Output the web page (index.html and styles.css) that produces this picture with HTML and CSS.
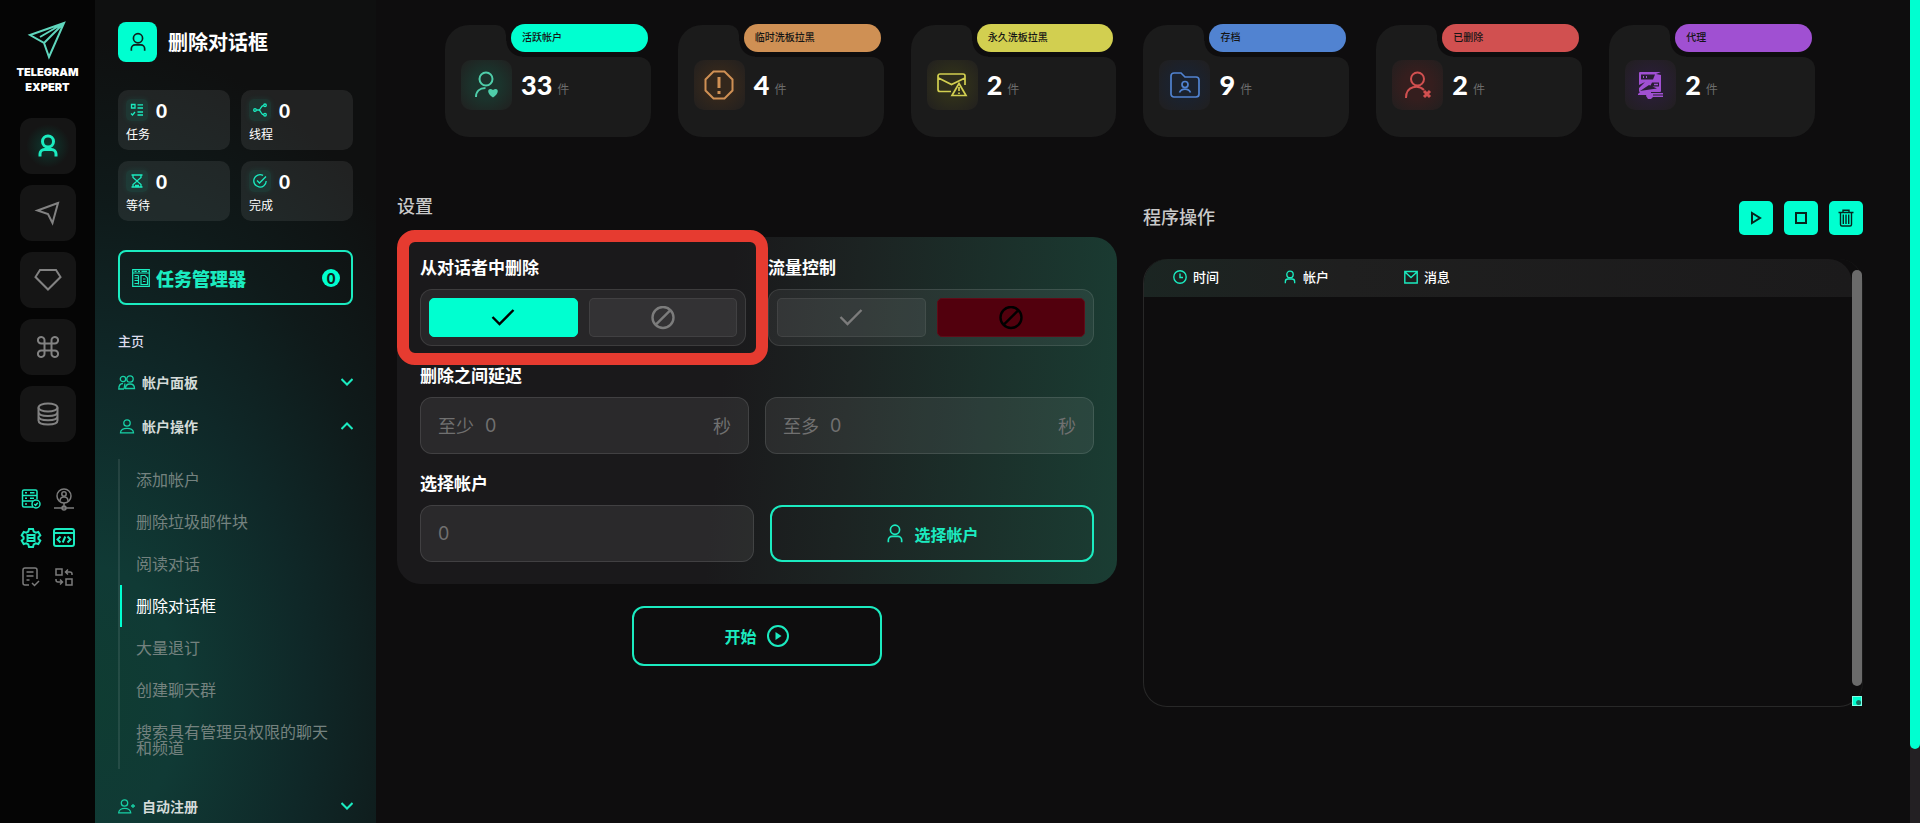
FILE: index.html
```html
<!DOCTYPE html>
<html lang="zh-CN">
  <head>
    <meta charset="UTF-8" />
    <meta name="viewport" content="width=device-width, initial-scale=1.0" />
    <title>Telegram Expert</title>
    <link rel="stylesheet" href="styles.css">
  </head>
  <body>
    <svg class="defs" aria-hidden="true">
      <symbol id="user" viewBox="0 0 24 24">
        <circle cx="12" cy="7.5" r="5.5" />
        <path d="M4 22.5v-2.500a4.500 4.500 0 0 1 4.500-4.500h7a4.500 4.500 0 0 1 4.500 4.500v2.500" />
      </symbol>
      <symbol id="check" viewBox="0 0 24 24">
        <path d="M1.500 11 8.500 18 22.500 4" />
      </symbol>
      <symbol id="ban" viewBox="0 0 24 24">
        <circle cx="12" cy="11.500" r="10.500" />
        <path d="M4.800 18.700 19.200 4.300" />
      </symbol>
      <symbol id="down" viewBox="0 0 12 8">
        <path d="M.5 1 6 6.500 11.500 1" />
      </symbol>
      <symbol id="up" viewBox="0 0 12 8">
        <path d="M.5 7 6 1.500 11.500 7" />
      </symbol>
    </svg>

    <div class="app">
      <nav class="rail">
        <a href="#" class="logo">
          <svg width="38" height="38" viewBox="0 0 38 38">
            <path d="M36 2 2 14l14 8 5 14zM36 2 16 22M36 2 12 16" />
          </svg>
          <span>TELEGRAM<br>EXPERT</span>
        </a>
        <div class="rail-main">
          <button class="rail-btn active" aria-label="帐户">
            <svg width="24" height="26"><use href="#user" /></svg>
          </button>
          <button class="rail-btn" aria-label="发送">
            <svg width="24" height="24" viewBox="0 0 24 24"><path d="M22 2 1.500 9.500 12 13l4.500 9z" /></svg>
          </button>
          <button class="rail-btn" aria-label="高级">
            <svg width="28" height="24" viewBox="0 0 28 24"><path d="M6 2h16l4.500 7L14 21.500 1.500 9z" /></svg>
          </button>
          <button class="rail-btn" aria-label="命令">
            <svg width="24" height="24" viewBox="0 0 24 24"><path d="M8.500 8.500h7v7h-7zM8.500 8.500V5.500a3.300 3.300 0 1 0-3.300 3zM15.500 8.500V5.500a3.300 3.300 0 1 1 3.300 3zM8.500 15.500v3a3.300 3.300 0 1 1-3.300-3zM15.500 15.500v3a3.300 3.300 0 1 0 3.300-3z" /></svg>
          </button>
          <button class="rail-btn" aria-label="数据库">
            <svg width="24" height="24" viewBox="0 0 24 24"><ellipse cx="12" cy="5.500" rx="9.500" ry="4" /><path d="M2.500 5.500v13c0 5.300 19 5.300 19 0v-13M2.500 10c0 5.300 19 5.300 19 0M2.500 14.300c0 5.300 19 5.300 19 0" /></svg>
          </button>
        </div>
        <div class="rail-tools">
          <a href="#" class="on" aria-label="服务器">
            <svg width="20" height="20" viewBox="0 0 20 20"><path d="M12 18H3a1.500 1.500 0 0 1-1.500-1.500v-14A1.500 1.500 0 0 1 3 1h11.500A1.500 1.500 0 0 1 16 2.500V10M1.500 6.500H16M1.500 12H12M4 3.800h2M4 9.200h2M4 15h2M9 3.800h4.500M9 9.200h4" /><circle cx="15" cy="15" r="4" /><path d="m13.300 15 1.300 1.300 2.200-2.500" /></svg>
          </a>
          <a href="#" aria-label="代理">
            <svg width="20" height="22" viewBox="0 0 20 22"><circle cx="10" cy="8" r="7" /><circle cx="10" cy="6" r="2.200" /><path d="M6 13c0-5.500 8-5.500 8 0M10 15v4M0 20h20M8 20a2 2 0 0 1 4 0 2 2 0 0 1-4 0" /></svg>
          </a>
          <a href="#" class="on bold" aria-label="设置">
            <svg width="20" height="20" viewBox="0 0 20 20"><path d="M8 1h4l.7 2.500 2 1.200L17.300 4l2 3.300-1.900 1.900v1.600l1.900 1.900-2 3.300-2.600-.7-2 1.200L12 19H8l-.7-2.500-2-1.200-2.600.7-2-3.300 1.900-1.900V9.200L.7 7.300l2-3.300 2.600.7 2-1.200z" /><path d="M6.500 7h7v6h-7zM6.500 10h7" /></svg>
          </a>
          <a href="#" class="on bold" aria-label="代码">
            <svg width="22" height="20" viewBox="0 0 22 20"><rect x="1" y="1" width="20" height="17" rx="2" /><path d="M1 5h20M7.500 8.500 4.500 11.500l3 3M14.500 8.500l3 3-3 3M12.300 8.500l-2.600 6" /></svg>
          </a>
          <a href="#" aria-label="日志">
            <svg width="20" height="20" viewBox="0 0 20 20"><path d="M8 18H4a2 2 0 0 1-2-2V3a2 2 0 0 1 2-2h10a2 2 0 0 1 2 2v9M5.500 5h7M5.500 9h7M5.500 13h3M11 16l2.500 2.500L18 14" /></svg>
          </a>
          <a href="#" aria-label="转换">
            <svg width="20" height="20" viewBox="0 0 20 20"><path d="M2 2h6v6H2zM12 12h6v6h-6zM12 5h4a2 2 0 0 1 2 2v1M14 2.500 11.500 5 14 7.500M2 12v1a2 2 0 0 0 2 2h4M6 12.500 8.500 15 6 17.500" /></svg>
          </a>
        </div>
      </nav>

      <aside class="sidebar">
        <header class="side-head">
          <span class="side-icon"><svg width="20" height="22"><use href="#user" /></svg></span>
          <h1>删除对话框</h1>
        </header>

        <div class="counters">
          <div class="counter">
            <span class="chip"><svg width="14" height="14" viewBox="0 0 14 14"><path d="M1.500 1.500h3.500v3.500H1.500zM7.500 1.800H13M7.500 5H13M7.500 9H13M7.500 12H13M1 10.500l1.500 1.500L5 9" /></svg></span>
            <b>0</b>
            <p>任务</p>
          </div>
          <div class="counter">
            <span class="chip"><svg width="14" height="14" viewBox="0 0 14 14"><circle cx="2" cy="7" r="1.300" /><circle cx="12" cy="2.300" r="1.300" /><circle cx="12" cy="11.700" r="1.300" /><path d="M3.300 7h2.500M10.700 2.300C7.500 2.500 8 7 5.800 7 8 7 7.500 11.500 10.700 11.700" /></svg></span>
            <b>0</b>
            <p>线程</p>
          </div>
          <div class="counter">
            <span class="chip"><svg width="14" height="14" viewBox="0 0 14 14"><path d="M1.500 1h11M1.500 13h11M3 1v2.500L7 7l4-3.500V1M3 13v-2.500L7 7l4 3.500V13M5 11.500h4" /></svg></span>
            <b>0</b>
            <p>等待</p>
          </div>
          <div class="counter">
            <span class="chip"><svg width="14" height="14" viewBox="0 0 14 14"><path d="M10 1.400A6.200 6.200 0 1 0 13.200 7M4 6.500 6.500 9 13 2.500" /></svg></span>
            <b>0</b>
            <p>完成</p>
          </div>
        </div>

        <button class="task-btn">
          <svg width="18" height="18" viewBox="0 0 18 18"><path d="M.7.700h16.600v16.600H.7zM.7 4h16.600M2.500 2.300h2M6 2.300h2M9.500 2.300h5.500M2.500 6.500h4M2.500 9h4M2.500 11.500h4M2.500 14.500h4M6.500 6.500v9M9 6.500h4l2.500 2.500v6.500H9zM11 10h2.500M11 12.500h2.500" /></svg>
          <span>任务管理器</span>
          <b class="badge">0</b>
        </button>

        <h2>主页</h2>
        <ul class="menu">
          <li>
            <button class="menu-btn">
              <svg class="menu-icon" width="17" height="15" viewBox="0 0 17 15"><circle cx="5" cy="4" r="2.700" /><circle cx="12" cy="4" r="3.200" /><path d="M6 14H.8c0-4 2-5.500 4.200-5.500M7.500 13.500c0-6 9-6 9 0zM7 8.500l-1 5.500" /></svg>
              <span>帐户面板</span>
              <svg class="arrow" width="12" height="8"><use href="#down" /></svg>
            </button>
          </li>
          <li>
            <button class="menu-btn">
              <svg class="menu-icon" width="17" height="15" viewBox="0 0 17 15"><circle cx="9" cy="4" r="3.200" /><path d="M2.500 13.800c0-6 13-6 13 0z" /></svg>
              <span>帐户操作</span>
              <svg class="arrow" width="12" height="8"><use href="#up" /></svg>
            </button>
            <ul class="submenu">
              <li><a href="#">添加帐户</a></li>
              <li><a href="#">删除垃圾邮件块</a></li>
              <li><a href="#">阅读对话</a></li>
              <li><a href="#" class="current">删除对话框</a></li>
              <li><a href="#">大量退订</a></li>
              <li><a href="#">创建聊天群</a></li>
              <li><a href="#">搜索具有管理员权限的聊天和频道</a></li>
            </ul>
          </li>
          <li>
            <button class="menu-btn">
              <svg class="menu-icon" width="17" height="15" viewBox="0 0 17 15"><circle cx="6.500" cy="4" r="3.200" /><path d="M.7 13.800c0-6 12-6 12 0zM15 5v4M13 7h4" /></svg>
              <span>自动注册</span>
              <svg class="arrow" width="12" height="8"><use href="#down" /></svg>
            </button>
          </li>
        </ul>
      </aside>

      <main>
        <section class="stats">
          <article class="stat green">
            <div class="tab"></div>
            <div class="pill">活跃帐户</div>
            <div class="stat-body">
              <span class="stat-icon"><svg width="26" height="28" viewBox="0 0 26 28"><circle cx="12" cy="8" r="6.500" /><path d="M2 26c0-5.500 3.500-9 9.500-9" /><path class="fill" d="M19 26.500c-8-5.500-4.500-11 0-7.500 4.500-3.500 8 2 0 7.500z" /></svg></span>
              <strong>33</strong><small>件</small>
            </div>
          </article>
          <article class="stat orange">
            <div class="tab"></div>
            <div class="pill">临时洗板拉黑</div>
            <div class="stat-body">
              <span class="stat-icon"><svg width="30" height="30" viewBox="0 0 30 30"><path d="M9.500 1.500h11l8 8v11l-8 8h-11l-8-8v-11z" /><path class="thick" d="M15 7v11M15 21v3" /></svg></span>
              <strong>4</strong><small>件</small>
            </div>
          </article>
          <article class="stat yellow">
            <div class="tab"></div>
            <div class="pill">永久洗板拉黑</div>
            <div class="stat-body">
              <span class="stat-icon"><svg width="30" height="24" viewBox="0 0 30 24"><path d="M14 18.500H3a2 2 0 0 1-2-2V3a2 2 0 0 1 2-2h23a2 2 0 0 1 2 2v9M1.500 5l13 6.500L28 5M22 10.500l7 12H15zM22 14v4M22 19.500v1.500" /></svg></span>
              <strong>2</strong><small>件</small>
            </div>
          </article>
          <article class="stat blue">
            <div class="tab"></div>
            <div class="pill">存档</div>
            <div class="stat-body">
              <span class="stat-icon"><svg width="30" height="26" viewBox="0 0 30 26"><path d="M1 22V4a3 3 0 0 1 3-3h7l4 4h11a3 3 0 0 1 3 3v14a3 3 0 0 1-3 3H4a3 3 0 0 1-3-3z" /><circle cx="15" cy="12.500" r="3" /><path d="M9.500 20.500c2-4.500 9-4.500 11 0" /></svg></span>
              <strong>9</strong><small>件</small>
            </div>
          </article>
          <article class="stat red">
            <div class="tab"></div>
            <div class="pill">已删除</div>
            <div class="stat-body">
              <span class="stat-icon"><svg width="28" height="28" viewBox="0 0 28 28"><circle cx="13.500" cy="8" r="6.500" /><path d="M2 27c0-13 13-13 18-8" /><path class="thick" d="m20 20 6 6M26 20l-6 6" /></svg></span>
              <strong>2</strong><small>件</small>
            </div>
          </article>
          <article class="stat purple">
            <div class="tab"></div>
            <div class="pill">代理</div>
            <div class="stat-body">
              <span class="stat-icon"><svg width="27" height="28" viewBox="0 0 27 28"><path class="fill" d="M2 2a1 1 0 0 1 1-1h20a1 1 0 0 1 1 1v18a1 1 0 0 1-1 1H3a1 1 0 0 1-1-1z" /><path class="slot" d="M4 3.500h14l-2 5H4zM24 1v3l-5-1zM15 11.500h7v4h-9zM2 14l6-3-6 6zM3 20l9-6 8 3.500-14 2z" /><path class="fill" d="M17 12.800h4v1.400h-4zM1 23l3-3h10v4H1zM15 22h11v1.500H15zM15 24.500h11V26H16zM10 22h6v4l-2 2h-3l-2-3z" /><path d="M6 6h1M9 6h1" /></svg></span>
              <strong>2</strong><small>件</small>
            </div>
          </article>
        </section>

        <div class="columns">
          <section class="settings">
            <h3>设置</h3>
            <form class="panel">
              <div class="row wide">
                <div class="field marked">
                  <span class="label" id="l-remove">从对话者中删除</span>
                  <div class="toggle" role="group" aria-labelledby="l-remove">
                    <button type="button" class="yes" aria-label="是"><svg width="24" height="24"><use href="#check" /></svg></button>
                    <button type="button" aria-label="否"><svg width="24" height="24"><use href="#ban" /></svg></button>
                  </div>
                </div>
                <div class="field">
                  <span class="label" id="l-flood">流量控制</span>
                  <div class="toggle" role="group" aria-labelledby="l-flood">
                    <button type="button" aria-label="是"><svg width="24" height="24"><use href="#check" /></svg></button>
                    <button type="button" class="no" aria-label="否"><svg width="24" height="24"><use href="#ban" /></svg></button>
                  </div>
                </div>
              </div>
              <div class="field">
                <span class="label">删除之间延迟</span>
                <div class="row">
                  <label class="box"><span>至少</span><input type="text" placeholder="0"><span>秒</span></label>
                  <label class="box"><span>至多</span><input type="text" placeholder="0"><span>秒</span></label>
                </div>
              </div>
              <div class="field">
                <label class="label" for="accounts">选择帐户</label>
                <div class="row pick">
                  <div class="box"><input type="text" id="accounts" placeholder="0"></div>
                  <button type="button" class="outline">
                    <svg width="20" height="21"><use href="#user" /></svg>
                    选择帐户
                  </button>
                </div>
              </div>
            </form>
            <button class="outline start">
              开始
              <svg width="24" height="24" viewBox="0 0 24 24"><circle cx="12" cy="12" r="10" /><path class="fill" d="M9.500 8v8l6-4z" /></svg>
            </button>
          </section>

          <section class="log">
            <header>
              <h3>程序操作</h3>
              <button aria-label="开始"><svg width="16" height="16" viewBox="0 0 16 16"><path d="M4 3v10L12 8z" /></svg></button>
              <button aria-label="停止"><svg width="16" height="16" viewBox="0 0 16 16"><path d="M3 3h10v10H3z" /></svg></button>
              <button aria-label="清除"><svg class="thin" width="16" height="18" viewBox="0 0 16 18"><path d="M.5 3.500h15M5 3V1.200h6V3M2.500 4v11.500a1.500 1.500 0 0 0 1.500 1.500h8a1.500 1.500 0 0 0 1.500-1.500V4M5.300 5.500v9.500M8 5.500v9.500M10.700 5.500v9.500" /></svg></button>
            </header>
            <div class="log-box">
              <div class="log-view">
                <table>
                  <thead>
                    <tr>
                      <th><span><svg width="14" height="14" viewBox="0 0 14 14"><circle cx="7" cy="7" r="6.200" /><path d="M7 3.500V7.500h3" /></svg>时间</span></th>
                      <th><span><svg width="14" height="14"><use href="#user" /></svg>帐户</span></th>
                      <th><span><svg width="14" height="14" viewBox="0 0 14 14"><path d="M.8 1.500h12.400v11.500H.8zM1 2l6 5.500L13 2" /></svg>消息</span></th>
                    </tr>
                  </thead>
                </table>
              </div>
              <div class="log-scroll">
                <span class="thumb"></span>
                <span class="grip"></span>
              </div>
            </div>
          </section>
        </div>
      </main>
      <div class="page-scroll"></div>
    </div>
  </body>
</html>
```

FILE: styles.css
```css
:root {
  --accent: #00ffd0;
  --line: #1bebc0;
  --bg: #0e0d0e;
}
* {
  box-sizing: border-box;
}
body {
  margin: 0;
  background: var(--bg);
  color: #fff;
  font-family: "Inter", "Noto Sans CJK SC", sans-serif;
}
h1, h2, h3, p, ul {
  margin: 0;
  padding: 0;
}
ul {
  list-style: none;
}
a {
  color: inherit;
  text-decoration: none;
}
button {
  padding: 0;
  border: none;
  background: none;
  color: inherit;
  font: inherit;
  cursor: pointer;
}
svg {
  display: block;
  flex: none;
  overflow: visible;
  fill: none;
  stroke: currentColor;
  stroke-width: 2;
}
svg .fill {
  fill: currentColor;
  stroke: none;
}
svg .thick {
  stroke-width: 3;
}
.defs {
  position: absolute;
  width: 0;
  height: 0;
}
.app {
  display: flex;
  height: 100vh;
  overflow: hidden;
}

/* left rail */
.rail {
  flex: none;
  width: 95px;
  padding-top: 21px;
  background: #050505;
  display: flex;
  flex-direction: column;
  align-items: center;
}
.logo {
  display: flex;
  flex-direction: column;
  align-items: center;
  gap: 6px;
  font-size: 11px;
  line-height: 15px;
  font-weight: 900;
  text-align: center;
}
.logo svg {
  color: #5fd6bd;
}
.rail-main {
  display: flex;
  flex-direction: column;
  gap: 11px;
  margin-top: 23px;
}
.rail-btn {
  width: 56px;
  height: 56px;
  border-radius: 12px;
  background: #151515;
  color: #828282;
  display: flex;
  align-items: center;
  justify-content: center;
}
.rail-btn.active {
  color: var(--line);
  background: radial-gradient(circle, #0d3a30, #151515 55%);
}
.rail-btn.active svg {
  stroke-width: 3;
}
.rail-tools {
  display: grid;
  grid-template-columns: 22px 22px;
  grid-auto-rows: 22px;
  gap: 17px 11px;
  margin-top: 46px;
  color: #7c7c7c;
}
.rail-tools a {
  display: flex;
  align-items: center;
  justify-content: center;
}
.rail-tools svg {
  stroke-width: 1.5;
}
.rail-tools .on {
  color: var(--line);
}
.rail-tools .bold svg {
  stroke-width: 2;
}

/* sidebar */
.sidebar {
  flex: none;
  width: 281px;
  padding: 22px 23px 0;
  background: radial-gradient(ellipse 420px 660px at 0 85%, #0f3c32 0, #103a35 20%, #0f2828 50%, #0f1a1a 75%, #0f1010 100%);
}
.side-head {
  display: flex;
  align-items: center;
  gap: 11px;
}
.side-icon {
  width: 39px;
  height: 40px;
  border-radius: 8px;
  background: var(--accent);
  color: #10201c;
  display: flex;
  align-items: center;
  justify-content: center;
}
.side-head h1 {
  font-size: 20px;
  line-height: 24px;
  padding-top: 2px;
}
.counters {
  display: grid;
  grid-template-columns: 1fr 1fr;
  gap: 11px;
  margin-top: 28px;
}
.counter {
  display: grid;
  grid-template-columns: 22px 1fr;
  column-gap: 8px;
  align-content: start;
  height: 60px;
  padding: 9px 8px;
  border-radius: 10px;
  background: rgba(255, 255, 255, 0.08);
}
.counter b {
  font-family: "Lato", sans-serif;
  font-size: 19px;
  line-height: 24px;
  font-weight: 900;
}
.counter p {
  grid-column: 1 / 3;
  font-size: 12px;
  line-height: 16px;
  margin-top: 4px;
}
.chip {
  width: 22px;
  height: 22px;
  border-radius: 5px;
  background: rgba(0, 255, 208, 0.08);
  box-shadow: 0 0 6px rgba(0, 255, 208, 0.08);
  color: var(--line);
  display: flex;
  align-items: center;
  justify-content: center;
}
.chip svg {
  stroke-width: 1.3;
}
.task-btn {
  width: 100%;
  height: 55px;
  margin-top: 29px;
  padding: 0 11px 0 12px;
  border: 2px solid var(--line);
  border-radius: 8px;
  color: var(--line);
  display: flex;
  align-items: center;
  gap: 6px;
  font-size: 18px;
  font-weight: 900;
}
.task-btn svg {
  stroke-width: 1.2;
}
.badge {
  margin-left: auto;
  width: 18px;
  height: 18px;
  border-radius: 50%;
  background: var(--accent);
  color: #0f1f1b;
  font-family: "Lato", sans-serif;
  font-size: 15px;
  line-height: 18px;
}
.sidebar h2 {
  margin-top: 27px;
  font-size: 13px;
  line-height: 18px;
  font-weight: 500;
  color: #dde;
}
.menu-btn {
  width: 100%;
  height: 44px;
  display: flex;
  align-items: center;
  gap: 7px;
  font-size: 14px;
  font-weight: 700;
  color: #d4dbd9;
}
.menu {
  margin-top: 10px;
}
.menu-icon {
  color: #17cfa5;
  stroke-width: 1.3;
}
.arrow {
  margin-left: auto;
  color: var(--line);
}
.submenu {
  display: flex;
  flex-direction: column;
  margin: 11px 0 15px;
  border-left: 2px solid rgba(255, 255, 255, 0.09);
}
.submenu a {
  display: block;
  padding: 13px 20px 13px 14px;
  border-left: 2px solid transparent;
  font-size: 16px;
  line-height: 16px;
  color: #74827f;
}
.submenu .current {
  border-color: var(--accent);
  color: #fff;
}

/* main area */
main {
  flex: 1;
  min-width: 0;
  padding: 24px 47px 0 21px;
}
.stats {
  display: grid;
  grid-template-columns: repeat(6, 1fr);
  gap: 27px;
  margin: 0 48px;
}
.stat {
  --card: #1b1b1b;
  display: grid;
  grid-template-columns: 61px 1fr;
  grid-template-rows: 33px 80px;
}
.green { --tone: #00ffd0; --icon: #4fceaa; --glow: #1b332c; }
.orange { --tone: #cf9054; --icon: #cf9054; --glow: #33271c; }
.yellow { --tone: #d2cf50; --icon: #d2cf50; --glow: #2e2e1b; }
.blue { --tone: #5183d1; --icon: #5183d1; --glow: #1b222e; }
.red { --tone: #d15050; --icon: #d15050; --glow: #351e1e; }
.purple { --tone: #a050d2; --icon: #a050d2; --glow: #281e32; }
.tab {
  position: relative;
  margin-top: 1px;
  border-radius: 24px 10px 0 0;
  background: var(--card);
}
/* rounded inner corner of the notch */
.tab::after {
  content: "";
  position: absolute;
  left: 100%;
  bottom: 0;
  width: 16px;
  height: 16px;
  background: radial-gradient(circle at 100% 0, transparent 15px, var(--card) 16px);
}
.pill {
  height: 28px;
  margin: 0 3px 0 5px;
  padding: 0 11px;
  border-radius: 14px;
  background: var(--tone);
  color: #151515;
  font-size: 10px;
  line-height: 26px;
  font-weight: 500;
}
.stat-body {
  grid-column: 1 / 3;
  display: flex;
  align-items: flex-start;
  padding: 3px 0 0 16px;
  border-radius: 0 12px 24px 24px;
  background: var(--card);
}
.stat-icon {
  width: 51px;
  height: 50px;
  border-radius: 10px;
  background: radial-gradient(circle, var(--glow) 40%, #211f1f);
  color: var(--icon);
  display: flex;
  align-items: center;
  justify-content: center;
}
.slot {
  fill: #281e32;
  stroke: none;
}
.stat strong {
  margin-left: 9px;
  font-family: "Lato", sans-serif;
  font-size: 27px;
  line-height: 50px;
  font-weight: 900;
}
.stat small {
  margin-left: 5px;
  font-size: 12px;
  line-height: 60px;
  color: #6c6c6c;
}
.blue svg, .yellow svg {
  stroke-width: 1.7;
}

.columns {
  display: grid;
  grid-template-columns: 1fr 1fr;
  gap: 26px;
  margin-top: 57px;
}
h3 {
  font-size: 18px;
  line-height: 24px;
  font-weight: 500;
  color: #c9c9c9;
}
.settings {
  display: flex;
  flex-direction: column;
}
.settings h3 {
  padding-top: 1px;
}
.panel {
  display: flex;
  flex-direction: column;
  gap: 19px;
  margin-top: 18px;
  padding: 20px 23px 22px;
  border-radius: 24px;
  background: linear-gradient(95deg, #1a191b 45%, #1c2322 62%, #1a3d33);
}
.row {
  display: grid;
  grid-template-columns: 1fr 1fr;
  gap: 16px;
}
.row.wide {
  gap: 22px;
}
.row.pick {
  grid-template-columns: 1.03fr 1fr;
}
.label {
  display: block;
  margin-bottom: 9px;
  font-size: 17px;
  line-height: 23px;
  font-weight: 700;
}
.toggle {
  display: grid;
  grid-template-columns: 1fr 1fr;
  gap: 11px;
  height: 57px;
  padding: 8px;
  border: 1px solid rgba(255, 255, 255, 0.1);
  border-radius: 12px;
  background: rgba(255, 255, 255, 0.06);
}
.toggle button {
  border: 1px solid rgba(255, 255, 255, 0.07);
  border-radius: 5px;
  background: rgba(255, 255, 255, 0.06);
  color: #7c7c7c;
  display: flex;
  align-items: center;
  justify-content: center;
}
.toggle svg {
  stroke-width: 2.4;
}
.toggle .yes {
  border-color: var(--accent);
  background: var(--accent);
  color: #000;
}
.toggle .no {
  border-color: #5f0c18;
  background: #52000d;
  color: #000;
}
.marked {
  position: relative;
}
.marked::after {
  content: "";
  position: absolute;
  inset: -27px -22px -19px -23px;
  border: 12px solid #e63b30;
  border-radius: 18px;
  pointer-events: none;
}
.box {
  display: flex;
  align-items: center;
  gap: 11px;
  min-width: 0;
  height: 57px;
  padding: 0 17px 1px;
  border: 1px solid rgba(255, 255, 255, 0.11);
  border-radius: 12px;
  background: rgba(255, 255, 255, 0.07);
  color: #707070;
  font-size: 18px;
}
.box input {
  flex: 1;
  min-width: 0;
  padding: 0;
  border: none;
  outline: none;
  background: none;
  color: inherit;
  font: inherit;
}
.box input::placeholder {
  color: #707070;
}
.outline {
  display: flex;
  align-items: center;
  justify-content: center;
  gap: 9px;
  height: 57px;
  border: 2px solid var(--line);
  border-radius: 12px;
  color: var(--line);
  font-size: 16px;
  font-weight: 700;
}
.start {
  align-self: center;
  width: 250px;
  height: 60px;
  margin-top: 22px;
}

/* log */
.log {
  padding-top: 7px;
}
.log header {
  display: flex;
  align-items: center;
  gap: 11px;
}
.log header h3 {
  margin-right: auto;
}
.log header button {
  width: 34px;
  height: 34px;
  border-radius: 5px;
  background: var(--accent);
  color: #06241d;
  display: flex;
  align-items: center;
  justify-content: center;
}
.log .thin {
  stroke-width: 1.4;
}
.log-box {
  display: flex;
  height: 448px;
  margin-top: 24px;
  border: 1px solid #282828;
  border-top: none;
  border-right-color: #191919;
  border-radius: 24px;
}
.log-view {
  flex: 1;
  border-radius: 24px 24px 0 24px;
  overflow: hidden;
}
table {
  width: 100%;
  border-collapse: collapse;
}
thead tr {
  height: 38px;
  background: linear-gradient(90deg, #1b2522, #1f1f1f 28%, #1b1a1b);
}
th {
  padding: 0 0 3px;
  font-size: 13px;
  font-weight: 500;
  text-align: left;
}
th:nth-child(1) {
  width: 139px;
  padding-left: 29px;
}
th:nth-child(2) {
  width: 121px;
}
th span {
  display: flex;
  align-items: center;
  gap: 6px;
}
th svg {
  color: var(--line);
  stroke-width: 1.4;
}
th use {
  stroke-width: 2.3;
}
.log-scroll {
  width: 10px;
  display: flex;
  flex-direction: column;
  padding-top: 11px;
}
.log-scroll .thumb {
  height: 416px;
  border-radius: 5px;
  background: #6a6a6a;
}
.log-scroll .grip {
  height: 10px;
  margin-top: auto;
  border: 1px solid #7fffe6;
  background: radial-gradient(circle at 70% 70%, #167060 2px, var(--accent) 3px);
}
.page-scroll {
  flex: none;
  width: 10px;
  background: #232023;
}
.page-scroll::before {
  content: "";
  display: block;
  height: 91vh;
  border-radius: 0 0 5px 5px;
  background: var(--accent);
}
```
